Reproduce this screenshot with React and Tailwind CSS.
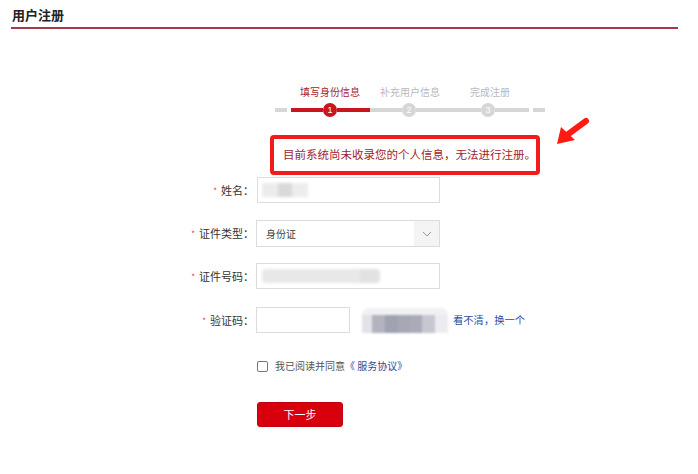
import React from 'react';

const FormLabel = ({ children }) => (
  <div className="w-[254px] shrink-0 text-right text-[11px] leading-[14px] text-[#333]">
    <span className="text-[#d93a3a] text-[8px] mr-[4px] align-[1px]">*</span>
    {children}
  </div>
);

const StepCircle = ({ n, active }) => (
  <div
    className={
      "w-[14px] h-[14px] rounded-full shrink-0 flex items-center justify-center font-['Liberation_Sans',sans-serif] text-[9px] leading-[14px] text-white " +
      (active ? 'bg-[#c9161d]' : 'bg-[#d6d6d6]')
    }
  >
    {n}
  </div>
);

const App = () => {
  return (
    <div className="w-[698px] h-[474px] relative overflow-hidden bg-white font-['Noto_Sans_CJK_SC','Noto_Sans',sans-serif]">
      {/* header */}
      <div className="ml-[11px] w-[667px] h-[29px] border-b-2 border-[#a5394b] pt-[6px] pl-[1px]">
        <h1 className="text-[13px] leading-[17px] font-bold text-[#222]">用户注册</h1>
      </div>

      {/* steps */}
      <div className="mt-[56px] ml-[290px] flex text-[10px] leading-[14px]">
        <div className="w-[80px] text-center text-[#a8232a]">填写身份信息</div>
        <div className="w-[80px] text-center text-[#b9b9b9]">补充用户信息</div>
        <div className="w-[80px] text-center text-[#b9b9b9]">完成注册</div>
      </div>
      <div className="mt-[4px] ml-[275px] h-[14px] flex items-center">
        <div className="w-[12px] h-[4px] bg-[#d6d6d6]" />
        <div className="w-[4px]" />
        <div className="w-[32px] h-[4px] bg-[#c9161d]" />
        <StepCircle n="1" active />
        <div className="w-[33px] h-[4px] bg-[#c9161d]" />
        <div className="w-[32px] h-[4px] bg-[#d6d6d6]" />
        <StepCircle n="2" />
        <div className="w-[65px] h-[4px] bg-[#d6d6d6]" />
        <StepCircle n="3" />
        <div className="w-[34px] h-[4px] bg-[#d6d6d6]" />
        <div className="w-[4px]" />
        <div className="w-[12px] h-[4px] bg-[#d6d6d6]" />
      </div>

      {/* error notice */}
      <div className="mt-[18px] ml-[270px] w-[270px] h-[40px] border-4 border-[#f21b1b] rounded-[4px] flex items-center pl-[9px] pb-[2px]">
        <p className="text-[11.5px] leading-[14px] text-[#a3222b] whitespace-nowrap">
          目前系统尚未收录您的个人信息，无法进行注册。
        </p>
      </div>

      {/* annotation arrow */}
      <svg className="absolute left-[552px] top-[114px]" width="40" height="34" viewBox="0 0 40 34">
        <line x1="34" y1="7" x2="15" y2="21" stroke="#ff1a12" strokeWidth="6" strokeLinecap="round" />
        <polygon points="5,30 9,13 23,26" fill="#ff1a12" />
      </svg>

      {/* form */}
      <div className="mt-[2px] flex items-center">
        <FormLabel>姓名：</FormLabel>
        <div className="ml-[3px] w-[183px] h-[26px] border border-[#dcdcdc] flex items-center pl-[4px]">
          <div className="flex h-[14px] blur-[1.5px]">
            <div className="w-[16px] bg-[#ececec]" />
            <div className="w-[14px] bg-[#d9d9d9]" />
            <div className="w-[16px] bg-[#ededed]" />
          </div>
        </div>
      </div>

      <div className="mt-[17px] flex items-center">
        <FormLabel>证件类型：</FormLabel>
        <div className="ml-[2px] w-[184px] h-[27px] border border-[#dcdcdc] flex items-stretch">
          <div className="flex-1 flex items-center pl-[9px] text-[10px] text-[#444]">身份证</div>
          <div className="w-[25px] bg-[#f4f4f4] flex items-center justify-center">
            <svg width="10" height="6" viewBox="0 0 10 6">
              <path d="M1 1 L5 5 L9 1" fill="none" stroke="#9a9a9a" strokeWidth="1" />
            </svg>
          </div>
        </div>
      </div>

      <div className="mt-[16px] flex items-center">
        <FormLabel>证件号码：</FormLabel>
        <div className="ml-[2px] w-[184px] h-[26px] border border-[#dcdcdc] flex items-center pl-[5px]">
          <div className="flex h-[14px] blur-[1.5px] rounded-[4px] overflow-hidden">
            <div className="w-[98px] bg-[#e8e8e8]" />
            <div className="w-[20px] bg-[#e2e2e2]" />
          </div>
        </div>
      </div>

      <div className="mt-[18px] flex items-center">
        <FormLabel>验证码：</FormLabel>
        <div className="ml-[2px] w-[94px] h-[26px] border border-[#dcdcdc]" />
        <div className="ml-[12px] w-[86px] h-[25px] flex flex-col blur-[1px]">
          <div className="h-[7px] bg-[#f1f1f4] rounded-t-[8px]" />
          <div className="flex-1 flex">
            <div className="w-[10px] bg-[#e2e2e8]" />
            <div className="w-[13px] bg-[#b2b3be]" />
            <div className="w-[13px] bg-[#a0a1b1]" />
            <div className="w-[12px] bg-[#a7a8b6]" />
            <div className="w-[12px] bg-[#aaabb9]" />
            <div className="w-[13px] bg-[#c6c7d1]" />
            <div className="w-[13px] bg-[#ececf0]" />
          </div>
        </div>
        <span className="ml-[5px] text-[10.3px] leading-[14px] text-[#2e4a9e]">看不清，换一个</span>
      </div>

      <div className="mt-[26px] pl-[257px] h-[14px] flex items-center">
        <div className="w-[11px] h-[11px] border border-[#777] rounded-[2px] bg-white" />
        <span className="ml-[7px] text-[10px] leading-[14px] text-[#555]">
          我已阅读并同意<span className="text-[#2e4a9e]">《 服务协议》</span>
        </span>
      </div>

      <button className="mt-[29px] ml-[257px] w-[86px] h-[25px] rounded-[3px] bg-[#d9000d] border border-[#c00010] text-white text-[11px] leading-none flex items-center justify-center">
        下一步
      </button>
    </div>
  );
};

export default App;
